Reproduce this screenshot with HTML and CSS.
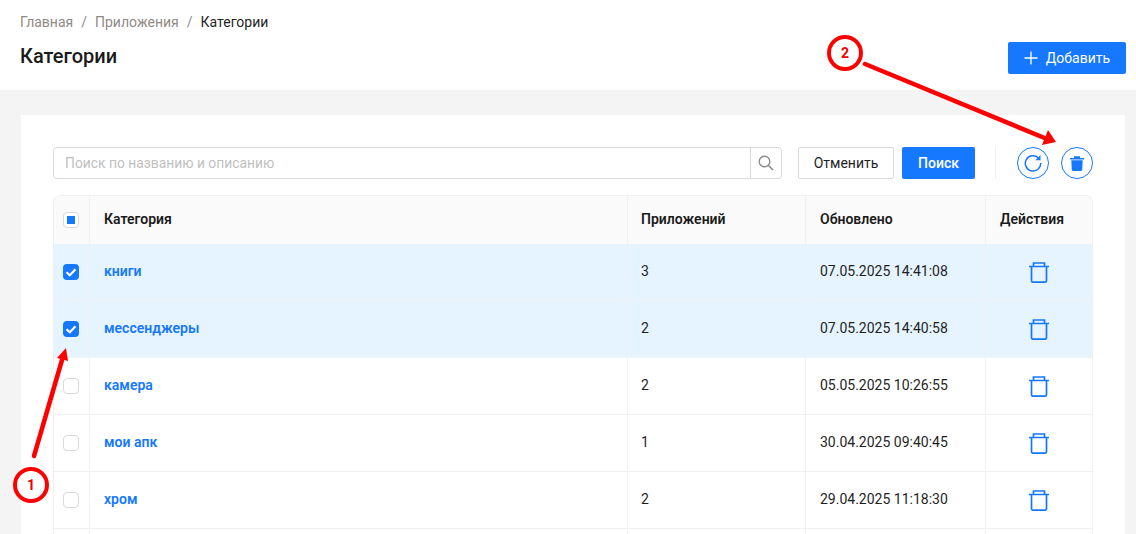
FILE: index.html
```html
<!DOCTYPE html>
<html lang="ru">
<head>
<meta charset="utf-8">
<title>Категории</title>
<link rel="stylesheet" href="styles.css">
</head>
<body>
<svg width="0" height="0" class="defs">
  <defs>
    <symbol id="bin" viewBox="0 0 20 21">
      <path d="M0 4.500h20M4.500 4.500V1h11v3.500M2.500 4.500v14c0 1 .7 1.700 1.700 1.700h11.600c1 0 1.700-.7 1.700-1.700v-14" fill="none" stroke="currentColor" stroke-width="1.700"/>
    </symbol>
    <symbol id="check" viewBox="0 0 16 16">
      <path d="M3.500 8.200 6.800 11.300 12.500 5.300" fill="none" stroke="#fff" stroke-width="2.200"/>
    </symbol>
  </defs>
</svg>
<header class="top">
  <div class="top-left">
    <nav class="crumbs"><a>Главная</a><i>/</i><a>Приложения</a><i>/</i><span>Категории</span></nav>
    <h1>Категории</h1>
  </div>
  <button class="btn primary add"><svg width="14" height="14" viewBox="0 0 14 14"><path d="M7 .5v13M.5 7h13" stroke="#fff" stroke-width="1.300" fill="none"/></svg>Добавить</button>
</header>
<main class="content">
  <section class="card">
    <div class="toolbar">
      <div class="search">
        <div class="search-text">Поиск по названию и описанию</div>
        <div class="search-btn"><svg width="16" height="16" viewBox="0 0 16 16"><circle cx="6.500" cy="6.500" r="5.300" fill="none" stroke="#8c8c8c" stroke-width="1.400"/><path d="M10.500 10.500 15 15" stroke="#8c8c8c" stroke-width="1.600"/></svg></div>
      </div>
      <button class="btn cancel">Отменить</button>
      <button class="btn primary find">Поиск</button>
      <div class="sep"></div>
      <button class="round"><svg width="18" height="18" viewBox="0 0 18 18"><path d="M14.200 3.700A7.700 7.700 0 1 0 16.700 9" fill="none" stroke="#1677ff" stroke-width="1.500"/><path d="M16.500 1v5.200h-5.200z" fill="#1677ff"/></svg></button>
      <button class="round"><svg width="14" height="15" viewBox="0 0 14 15"><path d="M0 2h14v1.600H0zM4 2V.3h6V2zM1.300 4.300h11.400l-.5 9.500c-.1.700-.5 1.100-1.200 1.100H3c-.7 0-1.100-.4-1.200-1.100z" fill="#1677ff"/></svg></button>
    </div>
    <div class="table">
      <div class="row head">
        <div class="c c1"><span class="box mixed"></span></div>
        <div class="c c2">Категория</div>
        <div class="c c3">Приложений</div>
        <div class="c c4">Обновлено</div>
        <div class="c c5">Действия</div>
      </div>
      <div class="row sel">
        <div class="c c1"><span class="box on"><svg width="16" height="16"><use href="#check"/></svg></span></div>
        <div class="c c2"><a>книги</a></div>
        <div class="c c3">3</div>
        <div class="c c4">07.05.2025 14:41:08</div>
        <div class="c c5"><svg class="trash" width="20" height="21"><use href="#bin"/></svg></div>
      </div>
      <div class="row sel">
        <div class="c c1"><span class="box on"><svg width="16" height="16"><use href="#check"/></svg></span></div>
        <div class="c c2"><a>мессенджеры</a></div>
        <div class="c c3">2</div>
        <div class="c c4">07.05.2025 14:40:58</div>
        <div class="c c5"><svg class="trash" width="20" height="21"><use href="#bin"/></svg></div>
      </div>
      <div class="row">
        <div class="c c1"><span class="box"></span></div>
        <div class="c c2"><a>камера</a></div>
        <div class="c c3">2</div>
        <div class="c c4">05.05.2025 10:26:55</div>
        <div class="c c5"><svg class="trash" width="20" height="21"><use href="#bin"/></svg></div>
      </div>
      <div class="row">
        <div class="c c1"><span class="box"></span></div>
        <div class="c c2"><a>мои апк</a></div>
        <div class="c c3">1</div>
        <div class="c c4">30.04.2025 09:40:45</div>
        <div class="c c5"><svg class="trash" width="20" height="21"><use href="#bin"/></svg></div>
      </div>
      <div class="row">
        <div class="c c1"><span class="box"></span></div>
        <div class="c c2"><a>хром</a></div>
        <div class="c c3">2</div>
        <div class="c c4">29.04.2025 11:18:30</div>
        <div class="c c5"><svg class="trash" width="20" height="21"><use href="#bin"/></svg></div>
      </div>
      <div class="row">
        <div class="c c1"></div><div class="c c2"></div><div class="c c3"></div><div class="c c4"></div><div class="c c5"></div>
      </div>
    </div>
  </section>
</main>
<svg class="marks" width="1136" height="534" viewBox="0 0 1136 534">
  <path d="M34 456 62 360" stroke="#f00" stroke-width="4.500" stroke-linecap="round" fill="none"/>
  <path d="M66 348 57 358 68 361z" fill="#f00"/>
  <circle cx="31" cy="485" r="16" fill="#fff" stroke="#f00" stroke-width="4"/>
  <text x="31" y="490" text-anchor="middle" class="mark-num">1</text>
  <path d="M865 64 1047 139" stroke="#f00" stroke-width="4.500" stroke-linecap="round" fill="none"/>
  <path d="M1056 142 1042 145 1048 130z" fill="#f00"/>
  <circle cx="845" cy="53" r="16" fill="#fff" stroke="#f00" stroke-width="4"/>
  <text x="845" y="58" text-anchor="middle" class="mark-num">2</text>
</svg>
</body>
</html>
```
FILE: styles.css
```css
* { box-sizing: border-box; }
html, body { margin: 0; height: 534px; overflow: hidden; }
body { font-family: Roboto, "Liberation Sans", sans-serif; font-size: 14px; color: #1f1f1f; background: #f4f4f4; position: relative; }
.defs { position: absolute; }
.top { height: 90px; background: #fff; padding: 0 10px 0 20px; display: flex; justify-content: space-between; align-items: flex-start; }
.crumbs { padding-top: 14px; line-height: 17px; color: #8c8c8c; display: flex; }
.crumbs a { color: #8f8a85; }
.crumbs i { font-style: normal; margin: 0 8px; }
.crumbs span { color: #1f1f1f; }
h1 { margin: 13px 0 0; font-size: 20px; line-height: 24px; font-weight: 500; color: #1a1a1a; }
.btn { font: inherit; border-radius: 2px; height: 32px; cursor: pointer; padding: 0; }
.primary { background: #1677ff; border: 0; color: #fff; }
.add { margin-top: 42px; width: 118px; display: flex; align-items: center; justify-content: center; gap: 8px; }
.content { padding: 25px 11px 0 21px; }
.card { background: #fff; height: 419px; padding: 32px 32px 0; overflow: hidden; }
.toolbar { display: flex; align-items: center; height: 32px; margin-bottom: 16px; }
.search { width: 729px; height: 32px; border: 1px solid #d9d9d9; border-radius: 4px; display: flex; }
.search-text { flex: 1; padding-left: 11px; line-height: 30px; color: #bfbfbf; font-size: 13.85px; }
.search-btn { width: 31px; border-left: 1px solid #d9d9d9; display: flex; align-items: center; justify-content: center; }
.cancel { width: 96px; margin-left: 16px; background: #fff; border: 1px solid #d9d9d9; color: #1f1f1f; }
.find { width: 73px; margin-left: 8px; font-weight: 500; }
.sep { width: 1px; height: 32px; background: #eee; margin: 0 21px 0 20px; }
.round { width: 32px; height: 32px; border-radius: 50%; border: 1px solid #1677ff; background: #fff; padding: 0; display: flex; align-items: center; justify-content: center; }
.round + .round { margin-left: 12px; }
.table { width: 1040px; border: 1px solid #f0f0f0; border-bottom: 0; border-radius: 8px 8px 0 0; overflow: hidden; }
.row { display: grid; grid-template-columns: 36px 538px 178px 180px 1fr; height: 57px; border-bottom: 1px solid #f0f0f0; }
.head { height: 48px; background: #fafafa; font-weight: 600; color: #1a1a1a; border-bottom: 0; }
.sel { background: #e6f4ff; border-bottom-color: #eef4f9; }
.c { display: flex; align-items: center; padding: 0 0 2px 14px; border-right: 1px solid #f0f0f0; }
.c3 { padding-left: 13px; }
.c5 { border-right: 0; }
.c1 { padding: 0 2px 0 0; justify-content: center; }
.head .c1 { padding-bottom: 1px; }
.row:not(.head) .c5 { justify-content: center; padding: 0; }
.c a { color: #1677ff; font-weight: 600; }
.box { width: 16px; height: 16px; border: 1px solid #d9d9d9; border-radius: 4px; background: #fff; display: flex; align-items: center; justify-content: center; }
.box.on { background: #1677ff; border: 0; }
.box svg { display: block; }
.box.mixed::after { content: ""; width: 8px; height: 8px; background: #1677ff; }
.trash { color: #1677ff; display: block; }
.marks { position: absolute; left: 0; top: 0; pointer-events: none; }
.mark-num { font-family: Roboto, sans-serif; font-weight: 700; font-size: 14px; fill: #e00; }
```
